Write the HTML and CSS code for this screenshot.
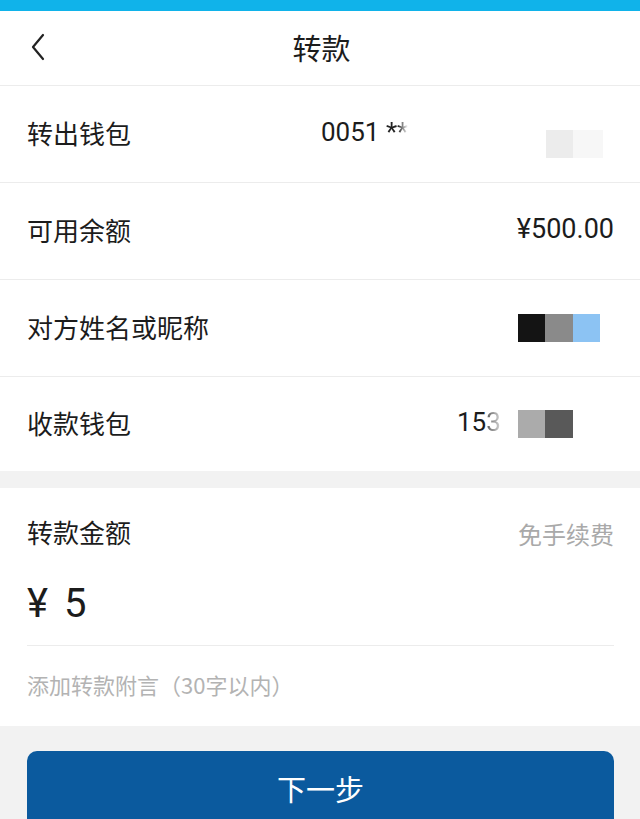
FILE: index.html
```html
<!DOCTYPE html>
<html lang="zh">
<head>
<meta charset="utf-8">
<title>转款</title>
<link rel="stylesheet" href="styles.css">
</head>
<body>
<div class="status"></div>
<header class="nav">
  <svg class="back" width="16" height="28" viewBox="0 0 16 28"><path d="M13 2 L3 14 L13 26" fill="none" stroke="#222" stroke-width="2.2" stroke-linecap="round" stroke-linejoin="round"/></svg>
  <h1 class="title">转款</h1>
</header>
<section class="list">
  <div class="row">
    <span class="label">转出钱包</span>
    <span class="acct">0051 <span class="fade">**</span></span>
    <span class="blocks"><i class="b b-light"></i><i class="b b-faint"></i></span>
  </div>
  <div class="row">
    <span class="label">可用余额</span>
    <span class="value">¥500.00</span>
  </div>
  <div class="row">
    <span class="label">对方姓名或昵称</span>
    <span class="blocks"><i class="b b-black"></i><i class="b b-gray"></i><i class="b b-blue"></i></span>
  </div>
  <div class="row last">
    <span class="label">收款钱包</span>
    <span class="phone">15<span class="fade2">3</span></span>
    <span class="blocks b4"><i class="b b-silver"></i><i class="b b-dark"></i></span>
  </div>
</section>
<section class="amount">
  <div class="amount-head">
    <span class="label">转款金额</span>
    <span class="free">免手续费</span>
  </div>
  <div class="amount-value"><span class="yen">¥</span><span class="num">5</span></div>
  <div class="note">添加转款附言（30字以内）</div>
</section>
<div class="actions">
  <button class="next">下一步</button>
</div>
</body>
</html>
```
FILE: styles.css
```css
html, body {
  margin: 0;
  padding: 0;
}
body {
  background: #f2f2f2;
  font-family: "Noto Sans CJK SC", "Noto Sans", sans-serif;
  color: #1c1c1c;
  width: 640px;
  overflow: hidden;
}
.status {
  height: 11px;
  background: #10b3ea;
}
.nav {
  height: 75px;
  box-sizing: border-box;
  padding: 0 27px 3px 30px;
  background: #fff;
  border-bottom: 1px solid #ececec;
  display: grid;
  grid-template-columns: 1fr auto 1fr;
  align-items: center;
}
.back {
  display: block;
  grid-column: 1;
  grid-row: 1;
}
.title {
  margin: 0;
  font-size: 29px;
  font-weight: 400;
  grid-column: 2;
  grid-row: 1;
}
.list {
  background: #fff;
}
.row {
  height: 96px;
  box-sizing: content-box;
  border-bottom: 1px solid #ececec;
  display: flex;
  align-items: center;
  padding: 0 26px 0 27px;
  position: relative;
  font-size: 26px;
}
.label,
.value {
  position: relative;
  top: -2px;
}
.row.last {
  height: 94px;
  border-bottom: none;
}
.label {
  font-size: 26px;
}
.acct,
.phone {
  position: absolute;
  top: 50%;
  transform: translateY(-50%);
  margin-top: -2px;
  font-family: Roboto, "Noto Sans", sans-serif;
  font-size: 26px;
}
.acct {
  left: 321px;
}
.phone {
  left: 457px;
}
.fade {
  background: linear-gradient(90deg, #222 0%, #222 55%, #fff 100%);
  -webkit-background-clip: text;
  background-clip: text;
  color: transparent;
}
.value {
  margin-left: auto;
  font-family: Roboto, "Noto Sans", sans-serif;
  font-size: 27px;
}
.fade2 {
  background: linear-gradient(90deg, #555 0%, #ddd 100%);
  -webkit-background-clip: text;
  background-clip: text;
  color: transparent;
}
.blocks {
  margin-left: auto;
  display: flex;
  padding-right: 14px;
}
.row:first-child .blocks {
  padding-right: 11px;
  margin-top: 20px;
}
.b4 {
  padding-right: 41px;
}
.b {
  display: block;
  width: 27px;
  height: 28px;
}
.b-light { background: #ececec; }
.b-faint { background: #f7f7f7; width: 30px; }
.b-black { background: #141414; }
.b-gray { background: #8a8a8a; width: 28px; }
.b-blue { background: #8cc3f3; width: 27px; }
.b-silver { background: #ababab; }
.b-dark { background: #595959; width: 28px; }
.amount {
  background: #fff;
  margin-top: 17px;
}
.amount-head {
  height: 94px;
  box-sizing: border-box;
  padding: 0 26px 4px 27px;
  display: flex;
  align-items: center;
  justify-content: space-between;
}
.free {
  font-size: 24px;
  color: #a9a9a9;
}
.amount-value {
  height: 64px;
  box-sizing: border-box;
  padding-bottom: 20px;
  margin: 0 26px 0 27px;
  border-bottom: 1px solid #ececec;
  display: flex;
  align-items: center;
  font-family: Roboto, "Noto Sans", sans-serif;
}
.yen {
  font-size: 40px;
  margin-right: 16px;
}
.num {
  font-size: 40px;
}
.note {
  height: 80px;
  box-sizing: border-box;
  padding: 0 0 4px 27px;
  display: flex;
  align-items: center;
  font-size: 22px;
  color: #b3b3b3;
}
.actions {
  padding: 25px 26px 0 27px;
}
.next {
  display: block;
  width: 100%;
  height: 80px;
  border: none;
  border-radius: 10px;
  background: #0b5a9e;
  color: #fff;
  font-family: "Noto Sans CJK SC", sans-serif;
  font-size: 29px;
  padding: 0 0 6px;
}
```
